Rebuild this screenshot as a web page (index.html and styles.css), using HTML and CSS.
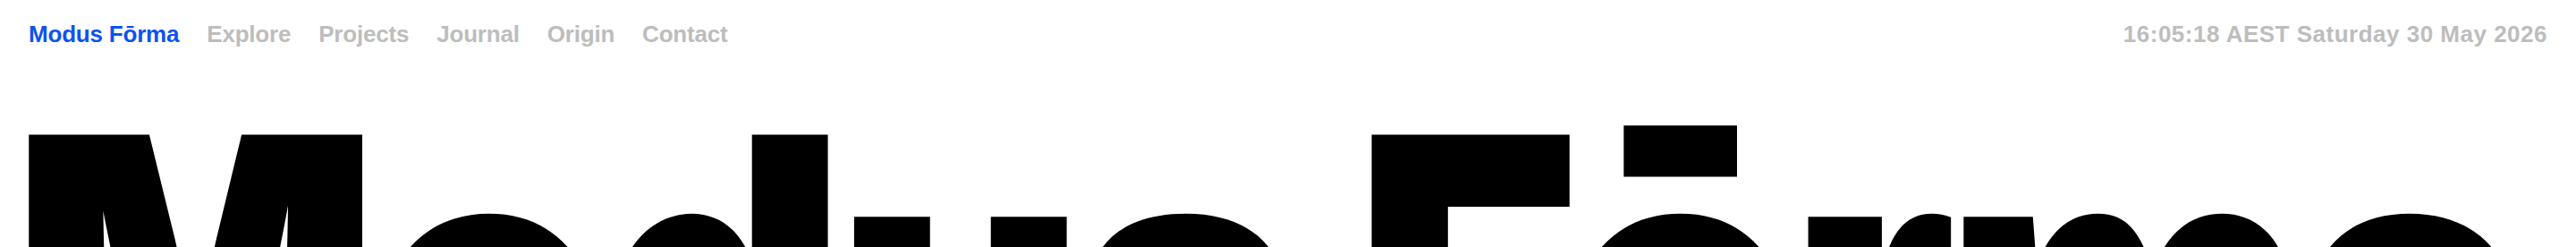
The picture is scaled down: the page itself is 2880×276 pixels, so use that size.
FILE: index.html
```html
<!DOCTYPE html>
<html lang="en">
<head>
<meta charset="utf-8">
<title>Modus Fōrma</title>
<link rel="stylesheet" href="styles.css">
</head>
<body>
<div class="page">
  <header class="topbar">
    <nav class="nav">
      <a class="brand" href="#">Modus Fōrma</a>
      <a class="nav-link" href="#">Explore</a>
      <a class="nav-link" href="#">Projects</a>
      <a class="nav-link" href="#">Journal</a>
      <a class="nav-link" href="#">Origin</a>
      <a class="nav-link" href="#">Contact</a>
    </nav>
    <div class="clock">16:05:18 AEST Saturday 30 May 2026</div>
  </header>
  <h1 class="hero">Modus Fōrma</h1>
</div>
</body>
</html>
```
FILE: styles.css
```css
html, body {
  margin: 0;
  padding: 0;
  background: #ffffff;
}
body {
  width: 2880px;
  height: 276px;
  overflow: hidden;
  font-family: "Liberation Sans", Arial, sans-serif;
}
.page {
  display: flex;
  flex-direction: column;
}
.topbar {
  display: flex;
  justify-content: space-between;
  align-items: baseline;
  padding: 25px 32px 0;
  font-size: 26px;
  line-height: 26px;
  font-weight: 700;
}
.nav {
  display: flex;
  gap: 31px;
}
.nav a {
  text-decoration: none;
  letter-spacing: -0.2px;
}
.brand {
  color: #0d52ef;
}
.nav-link {
  color: #bdbdbd;
}
.clock {
  color: #bdbdbd;
  letter-spacing: 0.5px;
}
.hero {
  margin: 31px 0 0;
  padding: 0 0 0 14px;
  font-family: Inter, "Liberation Sans", sans-serif;
  font-weight: 900;
  font-size: 505px;
  line-height: 1;
  letter-spacing: -16px;
  color: #000;
  white-space: nowrap;
  transform: scaleX(0.856);
  transform-origin: 0 0;
}
```
